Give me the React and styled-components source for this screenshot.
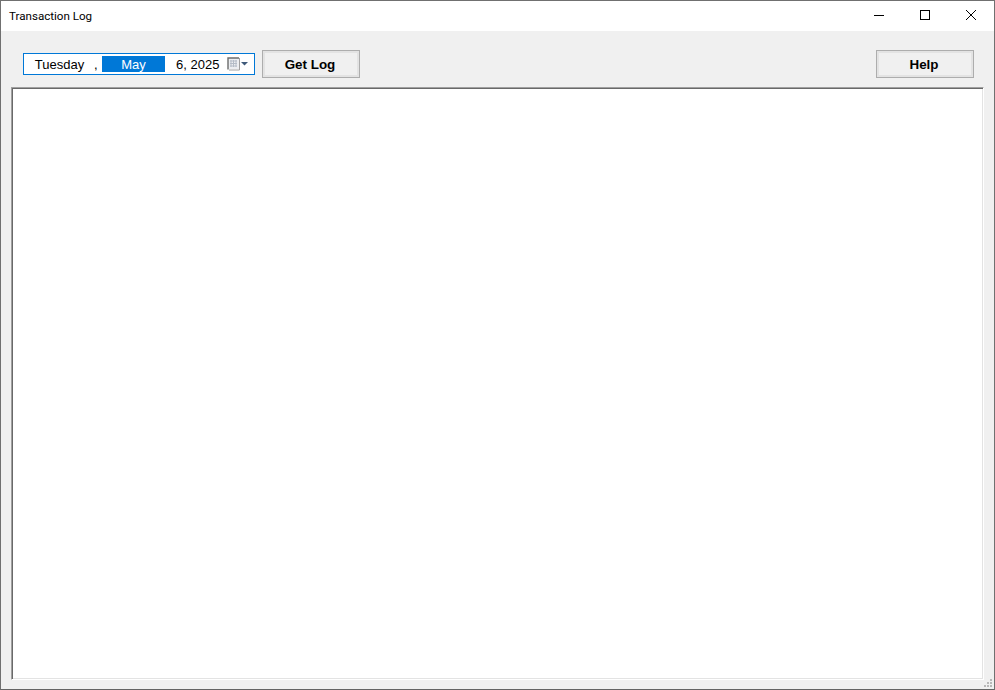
import React from "react";
import styled, { createGlobalStyle } from "styled-components";

const GlobalStyle = createGlobalStyle`
  html, body {
    margin: 0;
    padding: 0;
    background: #f0f0f0;
  }
`;

const Window = styled.div`
  box-sizing: border-box;
  width: 995px;
  height: 690px;
  display: flex;
  flex-direction: column;
  border: 1px solid #707070;
  border-bottom-color: #646464;
  background: #f0f0f0;
  overflow: hidden;
  position: relative;
`;

const TitleBar = styled.div`
  height: 30px;
  flex: none;
  display: flex;
  align-items: center;
  justify-content: space-between;
  background: #fff;
`;

const Title = styled.span`
  margin-left: 8px;
  font: 11.6px Roboto, "Open Sans", sans-serif;
  color: #000;
`;

const Caption = styled.div`
  display: flex;
`;

const CaptionButton = styled.div`
  box-sizing: border-box;
  width: 46px;
  height: 30px;
  padding: 9px 18px 0;
  svg {
    display: block;
  }
`;

const Toolbar = styled.div`
  height: 56px;
  flex: none;
  display: flex;
  align-items: flex-start;
  padding: 19px 20px 0 22px;
  box-sizing: border-box;
`;

const DatePicker = styled.div`
  box-sizing: border-box;
  width: 232px;
  height: 22px;
  margin-top: 3px;
  border: 1px solid #0078d7;
  background: #fff;
  display: flex;
  align-items: center;
  font: 13px "Liberation Sans", Arial, sans-serif;
  color: #000;
`;

const DatePart = styled.span`
  box-sizing: border-box;
  width: ${(p) => p.$w}px;
  margin-left: ${(p) => p.$ml || 0}px;
  height: 16px;
  line-height: 18px;
  text-align: ${(p) => p.$align || "center"};
  white-space: pre;
  background: ${(p) => (p.$selected ? "#0078d7" : "transparent")};
  color: ${(p) => (p.$selected ? "#fff" : "#000")};
`;

const PickerIcon = styled.svg`
  margin-left: 8px;
  display: block;
  flex: none;
`;

const Button = styled.button`
  box-sizing: border-box;
  width: 98px;
  height: 28px;
  margin-left: ${(p) => p.$ml || 0}px;
  padding: 0 2px 0 0;
  background: #f0f0f0;
  border: 1px solid #adadad;
  box-shadow: inset 0 0 0 2px #e3e3e3;
  font: bold 13.4px "Liberation Sans", Arial, sans-serif;
  color: #000;
`;

const Spacer = styled.div`
  flex: 1;
`;

const LogArea = styled.div`
  box-sizing: border-box;
  flex: none;
  height: 593px;
  margin: 0 10px;
  background: #fff;
  border-style: solid;
  border-width: 1px;
  border-color: #a0a0a0 #fff #fff #a0a0a0;
  box-shadow: inset 1px 1px 0 #696969, inset -1px -1px 0 #e3e3e3;
`;

const Grip = styled.svg`
  position: absolute;
  right: 0;
  bottom: 0;
  display: block;
`;

export default function App() {
  return (
    <>
      <GlobalStyle />
      <Window>
        <TitleBar>
          <Title>Transaction Log</Title>
          <Caption>
            <CaptionButton>
              <svg width="10" height="10" viewBox="0 0 10 10">
                <path d="M0 5.5h10" stroke="#000" fill="none" />
              </svg>
            </CaptionButton>
            <CaptionButton>
              <svg width="10" height="10" viewBox="0 0 10 10">
                <rect x="0.5" y="0.5" width="9" height="9" stroke="#000" fill="none" />
              </svg>
            </CaptionButton>
            <CaptionButton>
              <svg width="10" height="10" viewBox="0 0 10 10">
                <path d="M0 0l10 10M10 0l-10 10" stroke="#000" fill="none" />
              </svg>
            </CaptionButton>
          </Caption>
        </TitleBar>
        <Toolbar>
          <DatePicker>
            <DatePart $w={51} $ml={10}>Tuesday</DatePart>
            <DatePart $w={8} $ml={9} $align="left">,</DatePart>
            <DatePart $w={63} $selected>May</DatePart>
            <DatePart $w={43} $ml={11} $align="left">6, 2025</DatePart>
            <PickerIcon width="22" height="14" viewBox="0 0 22 14">
              <rect x="1" y="1" width="11" height="11" fill="#eceef1" />
              <path d="M3 4h7M3 6.5h7M3 9h7M4 3v7M6.5 3v7M9 3v7" stroke="#b4bcc7" fill="none" />
              <path d="M1 12.5V1h11" stroke="#6c6c6c" strokeWidth="1.4" fill="none" />
              <path d="M12.5 1v12H2" stroke="#a0a0a0" fill="none" />
              <path d="M14 5h7l-3.5 3.5z" fill="#3f5a7a" />
            </PickerIcon>
          </DatePicker>
          <Button $ml={7}>Get Log</Button>
          <Spacer />
          <Button>Help</Button>
        </Toolbar>
        <LogArea />
        <Grip width="10" height="10" viewBox="0 0 10 10">
          <path d="M6 0h2v2H6zM3 3h2v2H3zM6 3h2v2H6zM0 6h2v2H0zM3 6h2v2H3zM6 6h2v2H6z" fill="#b8b8b8" />
        </Grip>
      </Window>
    </>
  );
}
